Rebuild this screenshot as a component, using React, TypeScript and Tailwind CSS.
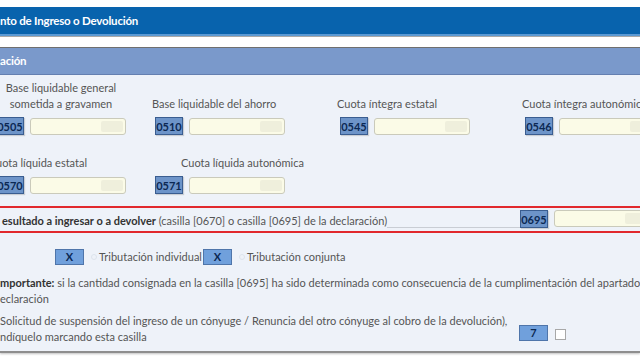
import React from "react";

function Code({ value, className = "" }: { value: string; className?: string }) {
  return (
    <div
      className={`flex h-[18px] w-[28px] shrink-0 items-center justify-center border border-[#3a5d90] bg-[#6d94c9] text-[11px] font-bold leading-none text-[#0b2853] shadow-[1px_1px_1px_rgba(0,0,0,0.15)] ${className}`}
    >
      {value}
    </div>
  );
}

function Input({ w, className = "" }: { w: string; className?: string }) {
  return (
    <div
      className={`flex h-[17px] shrink-0 items-stretch justify-end rounded-[3px] border border-[#cacabb] bg-[#fbfbe7] p-[2px] ${w} ${className}`}
    >
      <div className="w-[22px] rounded-[2px] bg-[#efefdc]" />
    </div>
  );
}

function Field({ code, w }: { code: string; w: string }) {
  return (
    <div className="flex items-center gap-[6px]">
      <Code value={code} />
      <Input w={w} />
    </div>
  );
}

function Mark({ label }: { label: string }) {
  return (
    <div className="flex h-[16px] w-[29px] shrink-0 items-center justify-center border border-[#4f75aa] bg-[#70a0dc] text-[11px] font-bold text-[#0b2853]">
      {label}
    </div>
  );
}

export default function App() {
  return (
    <div
      className="flex h-[360px] w-[640px] flex-col overflow-hidden bg-white text-[11px] text-[#555]"
      style={{ fontFamily: "Lato, 'Liberation Sans', sans-serif" }}
    >
      <div className="h-[7px] shrink-0" />
      <div className="flex h-[29px] shrink-0 items-center border-b-2 border-[#5b9ad4] bg-[#0863ad] text-[11.5px] font-bold tracking-[-0.2px] text-white">
        nto de Ingreso o Devolución
      </div>
      <div className="h-[11px] shrink-0 border-t border-[#a9a9a9] bg-white" />
      <div className="flex h-[28px] shrink-0 items-center border-y border-t-[#6f6f6f] border-b-[#6682b3] bg-[#7a99cb] text-[11.5px] font-bold tracking-[-0.2px] text-white">
        ación
      </div>

      {/* Liquidación */}
      <div className="flex shrink-0 flex-col border-b-2 border-[#8e8e8e] bg-[#eef2f9] pb-[6px] pt-[5px] shadow-[0_1px_2px_rgba(0,0,0,0.25)]">
        {/* row 1 */}
        <div className="flex items-end">
          <div className="-ml-[4px] flex w-[130px] flex-col">
            <div className="text-center leading-[16px]">
              Base liquidable general
              <br />
              sometida a gravamen
            </div>
            <div className="mt-[5px]">
              <Field code="0505" w="w-[96px]" />
            </div>
          </div>
          <div className="ml-[29px] flex flex-col">
            <div className="-ml-[3px] whitespace-nowrap leading-[16px]">Base liquidable del ahorro</div>
            <div className="mt-[5px]">
              <Field code="0510" w="w-[96px]" />
            </div>
          </div>
          <div className="ml-[55px] flex flex-col">
            <div className="-ml-[3px] whitespace-nowrap leading-[16px]">Cuota íntegra estatal</div>
            <div className="mt-[5px]">
              <Field code="0545" w="w-[96px]" />
            </div>
          </div>
          <div className="ml-[55px] flex flex-col">
            <div className="-ml-[3px] whitespace-nowrap leading-[16px]">Cuota íntegra autonómica</div>
            <div className="mt-[5px]">
              <Field code="0546" w="w-[96px]" />
            </div>
          </div>
        </div>

        {/* row 2 */}
        <div className="mt-[20px] flex items-end">
          <div className="-ml-[4px] flex w-[130px] flex-col">
            <div className="whitespace-nowrap leading-[16px]">uota líquida estatal</div>
            <div className="mt-[5px]">
              <Field code="0570" w="w-[96px]" />
            </div>
          </div>
          <div className="ml-[29px] flex flex-col">
            <div className="ml-[26px] whitespace-nowrap leading-[16px]">Cuota líquida autonómica</div>
            <div className="mt-[5px]">
              <Field code="0571" w="w-[96px]" />
            </div>
          </div>
        </div>

        {/* resultado */}
        <div className="-ml-[2px] -mr-[24px] mt-[12px] border-2 border-[#e1282d]">
          <div className="flex h-[23px] items-start pl-[2px] pr-[12px]">
            <div className="mt-[5px] whitespace-nowrap leading-[16px]">
              <span className="font-bold text-[#333]">esultado a ingresar o a devolver</span>{" "}
              (casilla [0670] o casilla [0695] de la declaración)
            </div>
            <div className="h-[20px] flex-1 border-b border-[#c9cdd4]" />
            <Code value="0695" className="mt-[2px] h-[16px]" />
            <Input w="w-[96px]" className="ml-[6px] mt-[2px] h-[16px]" />
          </div>
        </div>

        {/* tributación */}
        <div className="mt-[16px] flex h-[16px] items-center pl-[55px]">
          <Mark label="X" />
          <div className="ml-[7px] h-[6px] w-[6px] rounded-full border border-[#dde3ec]" />
          <span className="ml-[2px] whitespace-nowrap">Tributación individual</span>
          <div className="ml-[1px]">
            <Mark label="X" />
          </div>
          <div className="ml-[7px] h-[6px] w-[6px] rounded-full border border-[#dde3ec]" />
          <span className="ml-[2px] whitespace-nowrap">Tributación conjunta</span>
        </div>

        {/* importante */}
        <div className="mt-[10px] whitespace-nowrap leading-[16px]">
          <span className="font-bold text-[#333]">mportante:</span> si la cantidad consignada en la casilla
          [0695] ha sido determinada como consecuencia de la cumplimentación del apartado
          <br />
          eclaración
        </div>

        {/* solicitud */}
        <div className="mt-[6px] flex items-end">
          <div className="w-[519px] whitespace-nowrap leading-[16px]">
            Solicitud de suspensión del ingreso de un cónyuge / Renuncia del otro cónyuge al cobro de la
            devolución),
            <br />
            ndíquelo marcando esta casilla
          </div>
          <div className="mb-[4px]">
            <Mark label="7" />
          </div>
          <div className="mb-[5px] ml-[7px] h-[11px] w-[11px] border border-[#a8a8a8] bg-white" />
        </div>
      </div>
    </div>
  );
}
